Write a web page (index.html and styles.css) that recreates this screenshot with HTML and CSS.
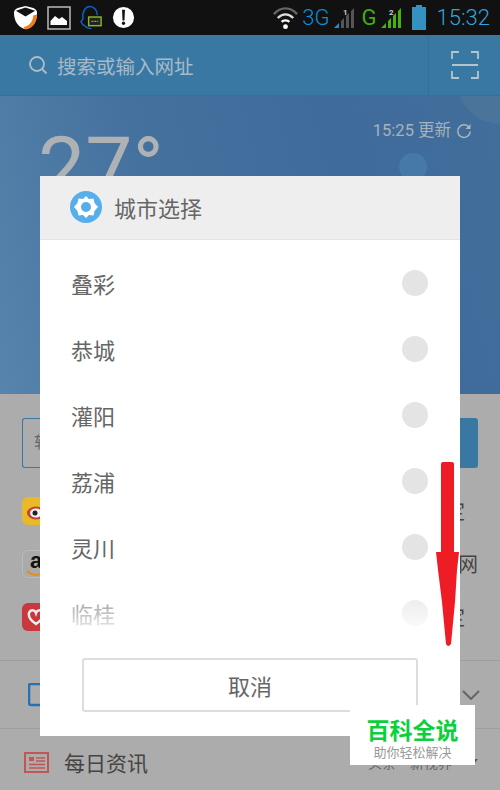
FILE: index.html
```html
<!DOCTYPE html>
<html>
	<head>
		<meta charset="utf-8">
		<meta name="viewport" content="width=device-width, initial-scale=1">
		<title>城市选择</title>
		<link rel="stylesheet" href="styles.css">
	</head>
	<body>
		<div class="screen">
			<!--status bar-->
			<div class="status">
				<div class="status-left">
					<svg width="25" height="25" viewBox="0 0 26 26">
						<path d="M1 8 C1 5 3 4 5 3 L13 1 L21 3 C23 4 25 5 25 8 C25 17 21 24 13 25 C6 24 1 17 1 8 Z" fill="#fff"/>
						<path d="M3 6 L13 2.500 L23 6 L13 12 Z" fill="#111"/>
						<path d="M11 23 C17 22 21 17 21 11 L25 10 C25 18 20 25 13 25.500 Z" fill="#ef7d1a"/>
					</svg>
					<svg width="24" height="24" viewBox="0 0 24 24">
						<rect x="1" y="1" width="22" height="22" fill="#111" stroke="#bbb" stroke-width="1.500"/>
						<path d="M3.500 19 L3.500 15 L8 10 L12 13 L15 11 L20 15 L20 19 Z" fill="#fff"/>
					</svg>
					<svg width="23" height="26" viewBox="0 0 24 26">
						<path d="M5 21 L3 20 L1 17 L3 14 C2 6 6 1 10 1 C15 1 18 5 18 10 M5 21 C7 24 10 24 12 24" fill="none" stroke="#1060c0" stroke-width="1.500"/>
						<rect x="9" y="12" width="13" height="9" fill="#222" stroke="#8ab81e" stroke-width="1.500"/>
						<path d="M12 16.500 H19" stroke="#8ab81e" stroke-width="1.500" stroke-dasharray="2 1"/>
					</svg>
					<svg width="23" height="23" viewBox="0 0 24 24">
						<circle cx="12" cy="12" r="11" fill="#fff"/>
						<path d="M10.500 4 H13.500 L13 15 H11 Z" fill="#111"/>
						<circle cx="12" cy="18" r="1.700" fill="#111"/>
					</svg>
				</div>
				<div class="status-right">
					<svg width="27" height="26" viewBox="0 0 28 26">
						<path d="M2 9 C9 1 19 1 26 9" fill="none" stroke="#666" stroke-width="2.500"/>
						<path d="M6 13 C11 8 17 8 22 13" fill="none" stroke="#ddd" stroke-width="2.500"/>
						<path d="M10 17 C12 15 16 15 18 17" fill="none" stroke="#fff" stroke-width="2.500"/>
						<circle cx="14" cy="22" r="2.500" fill="#fff"/>
					</svg>
					<span class="net net-blue">3G</span>
					<svg class="sig" width="24" height="24" viewBox="0 0 24 24">
						<path d="M1 22 L6 17 V22 Z" fill="#1a8fd8"/>
						<path d="M8 22 V15 L11 12 V22 Z M13 22 V10 L16 7 V22 Z M18 22 V5 L21 2 V22 Z" fill="#555"/>
						<text x="10" y="9" class="sim">1</text>
					</svg>
					<span class="net net-green">G</span>
					<svg class="sig" width="24" height="24" viewBox="0 0 24 24">
						<path d="M1 22 L6 17 V22 Z M8 22 V15 L11 12 V22 Z M13 22 V10 L16 7 V22 Z M18 22 V5 L21 2 V22 Z" fill="#46b30c"/>
						<text x="9" y="9" class="sim">2</text>
					</svg>
					<svg class="batt" width="16" height="26" viewBox="0 0 16 26">
						<path d="M5 0 H11 V2 H15 V25 H1 V2 H5 Z" fill="#3592c0"/>
					</svg>
					<span class="clock">15:32</span>
				</div>
			</div>

			<!--search-->
			<div class="search">
				<div class="search-main">
					<svg width="20" height="20" viewBox="0 0 20 20">
						<circle cx="9" cy="9" r="7" fill="none" stroke="#a9bdcb" stroke-width="1.800"/>
						<path d="M14 14 L18.500 18.500" stroke="#a9bdcb" stroke-width="1.800"/>
					</svg>
					<span>搜索或输入网址</span>
				</div>
				<div class="scan">
					<svg width="28" height="28" viewBox="0 0 28 28">
						<path d="M1 8 V1 H8 M20 1 H27 V8 M1 20 V27 H8 M20 27 H27 V20 M1 14 H27" fill="none" stroke="#b4c4cf" stroke-width="1.800"/>
					</svg>
				</div>
			</div>

			<!--weather-->
			<div class="weather">
				<div class="weather-left">
					<div class="temp">27°</div>
				</div>
				<div class="update">
					15:25 更新
					<svg width="16" height="16" viewBox="0 0 16 16">
						<path d="M13.500 5 A6.300 6.300 0 1 0 14.300 8.500" fill="none" stroke="#adb5bc" stroke-width="1.500"/>
						<path d="M14.500 1 V6 H9.500 Z" fill="#adb5bc"/>
					</svg>
				</div>
				<div class="glow-a"></div>
				<div class="glow-b"></div>
			</div>

			<!--page under the dialog-->
			<div class="lower">
				<div class="lower-top">
					<div class="box-row">
						<div class="box">软</div>
						<div class="box-btn"></div>
					</div>
					<div class="site-row">
						<div class="site site-weibo">
							<svg width="22" height="22" viewBox="0 0 22 22">
								<ellipse cx="11" cy="13" rx="9" ry="6.500" fill="#c9402c"/>
								<ellipse cx="11" cy="13" rx="6" ry="4.500" fill="#f2f2f2"/>
								<circle cx="10" cy="13" r="2.500" fill="#222"/>
							</svg>
						</div>
						<span class="site-name short">彩定</span>
					</div>
					<div class="site-row">
						<div class="site site-amazon">
							<span>a</span>
							<svg width="20" height="7" viewBox="0 0 20 7"><path d="M1 1 C6 6 13 6 19 2" fill="none" stroke="#e09020" stroke-width="2"/></svg>
						</div>
						<span class="site-name">亚马逊网</span>
					</div>
					<div class="site-row">
						<div class="site site-red">
							<svg width="18" height="18" viewBox="0 0 18 18"><path d="M9 16 C3 12 1 9 2 5 C4 1 8 2 9 5 C10 2 14 1 16 5 C17 9 15 12 9 16 Z" fill="none" stroke="#eee" stroke-width="2.500"/></svg>
						</div>
						<span class="site-name short">彩定</span>
					</div>
				</div>
				<div class="bar bar-tablet">
					<svg width="16" height="24" viewBox="0 0 16 24"><rect x="1" y="1" width="22" height="21" rx="2" fill="none" stroke="#2272b8" stroke-width="2.500"/></svg>
					<svg class="chev" width="18" height="10" viewBox="0 0 18 10"><path d="M1 1 L9 9 L17 1" fill="none" stroke="#666" stroke-width="2"/></svg>
				</div>
				<div class="bar bar-news">
					<svg width="25" height="21" viewBox="0 0 25 21">
						<rect x="1" y="1" width="23" height="19" fill="none" stroke="#c25555" stroke-width="2"/>
						<path d="M5 5 H10 V9 H5 Z" fill="#c25555"/>
						<path d="M12 6 H21 M12 9 H21 M5 12.500 H21 M5 16 H21" stroke="#c25555" stroke-width="1.500"/>
					</svg>
					<span class="news-title">每日资讯</span>
					<span class="news-sub">头条·新视界</span>
					<svg class="tri" width="10" height="6" viewBox="0 0 10 6"><path d="M0 0 H10 L5 6 Z" fill="#555"/></svg>
				</div>
			</div>

			<!--dialog-->
			<div class="dialog">
				<div class="dialog-head">
					<svg width="32" height="32" viewBox="0 0 32 32">
						<circle cx="16" cy="16" r="16" fill="#56aeea"/>
						<path d="M16 5 L19 8 L23.500 7.500 L24.500 12 L28 16 L24.500 20 L23.500 24.500 L19 24 L16 27 L13 24 L8.500 24.500 L7.500 20 L4 16 L7.500 12 L8.500 7.500 L13 8 Z" fill="#fff"/>
						<circle cx="16" cy="16" r="5" fill="#56aeea"/>
					</svg>
					<span>城市选择</span>
				</div>
				<div class="city-list">
					<div class="city"><span>叠彩</span><i class="radio"></i></div>
					<div class="city"><span>恭城</span><i class="radio"></i></div>
					<div class="city"><span>灌阳</span><i class="radio"></i></div>
					<div class="city"><span>荔浦</span><i class="radio"></i></div>
					<div class="city"><span>灵川</span><i class="radio"></i></div>
					<div class="city"><span>临桂</span><i class="radio"></i></div>
					<div class="fade"></div>
				</div>
				<div class="cancel">取消</div>
			</div>

			<!--red arrow drawn over the picture-->
			<svg class="arrow" width="26" height="186" viewBox="0 0 26 186">
				<path d="M6 2 Q6 0 8 0 H17 Q19 0 19 2 V90 H24 L22 108 L20 140 L16 182 Q13 186 11 182 L7 140 L3 108 L1 90 H6 Z" fill="#ee1c25"/>
			</svg>

			<!--watermark-->
			<div class="mark">
				<div class="mark-title">百科全说</div>
				<div class="mark-sub">助你轻松解决</div>
			</div>
		</div>
	</body>
</html>
```

FILE: styles.css
```css
* {
	box-sizing: border-box;
}
body {
	margin: 0;
	font-family: "Noto Sans CJK SC", "Noto Sans", sans-serif;
}
.screen {
	position: relative;
	width: 500px;
	height: 790px;
	overflow: hidden;
	background: #acacac;
}
/* status bar */
.status {
	height: 35px;
	background: #111;
	display: flex;
	justify-content: space-between;
	align-items: center;
	padding: 0 10px 0 13px;
}
.status-left {
	display: flex;
	align-items: center;
	gap: 9px;
}
.status-right {
	display: flex;
	align-items: center;
}
.net {
	font-family: Roboto, sans-serif;
	font-size: 22px;
	font-weight: 300;
	line-height: 35px;
}
.net-blue {
	color: #0a8fd6;
	margin-left: 3px;
}
.net-green {
	color: #3fae0d;
	margin-left: 5px;
	font-weight: 400;
}
.sig {
	margin-left: 3px;
}
.sim {
	font-family: Roboto, sans-serif;
	font-size: 8px;
	font-weight: 700;
	fill: #ccc;
}
.batt {
	margin-left: 7px;
}
.clock {
	font-family: Roboto, sans-serif;
	font-size: 22px;
	font-weight: 300;
	line-height: 35px;
	color: #36a3dc;
	margin-left: 10px;
}
/* search */
.search {
	height: 61px;
	background: #3a78a4;
	border-bottom: 1px solid #35709a;
	display: flex;
}
.search-main {
	flex: 1;
	display: flex;
	align-items: center;
	gap: 9px;
	padding-left: 28px;
	font-size: 19.500px;
	color: #a6bac8;
}
.scan {
	width: 72px;
	border-left: 1px solid #35709a;
	display: flex;
	align-items: center;
	justify-content: center;
}
/* weather */
.weather {
	position: relative;
	height: 298px;
	background: linear-gradient(75deg, #5684ac 0%, #44719e 35%, #3e6b9a 70%, #416e9b 100%);
	display: flex;
	justify-content: space-between;
	align-items: flex-start;
	overflow: hidden;
}
.weather-left {
	padding-left: 38px;
}
.temp {
	font-family: Roboto, sans-serif;
	font-size: 84px;
	line-height: 98px;
	margin-top: 23px;
	color: #aeb2b5;
}
.update {
	display: flex;
	align-items: center;
	gap: 5px;
	margin: 23px 28px 0 0;
	font-family: Roboto, "Noto Sans CJK SC", sans-serif;
	font-size: 16.500px;
	line-height: 24px;
	color: #a9b2ba;
}
.glow-a {
	position: absolute;
	left: 399px;
	top: 57px;
	width: 28px;
	height: 28px;
	border-radius: 50%;
	background: #4679a8;
}
.glow-b {
	position: absolute;
	left: 456px;
	top: -62px;
	width: 90px;
	height: 90px;
	border-radius: 50%;
	background: #4a7499;
}
/* page under the dialog */
.lower-top {
	height: 266px;
	padding: 24px 22px 0;
}
.box-row {
	display: flex;
	height: 50px;
	margin-bottom: 29px;
}
.box {
	flex: 1;
	border: 1.500px solid #3a78a4;
	border-right: none;
	border-radius: 3px 0 0 3px;
	padding: 10px 11px;
	font-size: 16px;
	color: #666;
}
.box-btn {
	width: 78px;
	background: #3a78a4;
	border-radius: 0 3px 3px 0;
}
.site-row {
	display: flex;
	justify-content: space-between;
	align-items: center;
	height: 28px;
	margin-bottom: 25px;
}
.site {
	width: 28px;
	height: 28px;
	border-radius: 6px;
	display: flex;
	flex-direction: column;
	align-items: center;
	justify-content: center;
}
.site-weibo {
	background: #e8b92a;
}
.site-amazon {
	background: #aaa;
	border: 1px solid #bbb;
}
.site-amazon span {
	font-family: "Liberation Sans", sans-serif;
	font-weight: 700;
	font-size: 22px;
	line-height: 18px;
	color: #111;
}
.site-red {
	background: #c8383c;
}
.site-name {
	font-size: 20px;
	line-height: 28px;
	color: #444;
	white-space: nowrap;
}
.short {
	margin-right: 13px;
}
.bar {
	display: flex;
	align-items: center;
	height: 68px;
	border-top: 1px solid #9e9e9e;
	padding: 0 20px 0 28px;
}
.bar-tablet {
	justify-content: space-between;
}
.bar-news {
	height: 62px;
	padding: 5px 22px 0 24px;
}
.news-title {
	margin-left: 15px;
	font-size: 21px;
	color: #444;
}
.news-sub {
	margin-left: auto;
	font-size: 14px;
	color: #666;
}
.tri {
	margin: 0 0 0 16px;
}
/* dialog */
.dialog {
	position: absolute;
	left: 40px;
	top: 176px;
	width: 420px;
	height: 560px;
	background: #fff;
	display: flex;
	flex-direction: column;
}
.dialog-head {
	height: 64px;
	background: #eee;
	border-bottom: 1px solid #e4e4e4;
	display: flex;
	align-items: center;
	gap: 12px;
	padding: 0 0 2px 30px;
	font-size: 22px;
	color: #666;
}
.city-list {
	position: relative;
	padding: 10px 32px 0 31px;
	height: 418px;
}
.city {
	display: flex;
	justify-content: space-between;
	align-items: center;
	height: 66px;
	font-size: 22px;
	color: #666;
}
.radio {
	width: 26px;
	height: 26px;
	border-radius: 50%;
	background: #e4e4e4;
}
.fade {
	position: absolute;
	left: 0;
	right: 0;
	bottom: 20px;
	height: 60px;
	background: linear-gradient(rgba(255, 255, 255, 0), #fff);
}
.cancel {
	margin: 0 42px;
	height: 54px;
	border: 2px solid #ddd;
	border-radius: 3px;
	font-size: 22px;
	line-height: 50px;
	text-align: center;
	color: #666;
}
/* arrow and watermark */
.arrow {
	position: absolute;
	left: 435px;
	top: 462px;
}
.mark {
	position: absolute;
	left: 350px;
	top: 705px;
	width: 125px;
	height: 60px;
	background: #fff;
	text-align: center;
	padding-top: 10px;
}
.mark-title {
	font-size: 23px;
	line-height: 28px;
	font-weight: 700;
	color: #0ccf3c;
}
.mark-sub {
	font-size: 13px;
	line-height: 17px;
	color: #999;
}
```
